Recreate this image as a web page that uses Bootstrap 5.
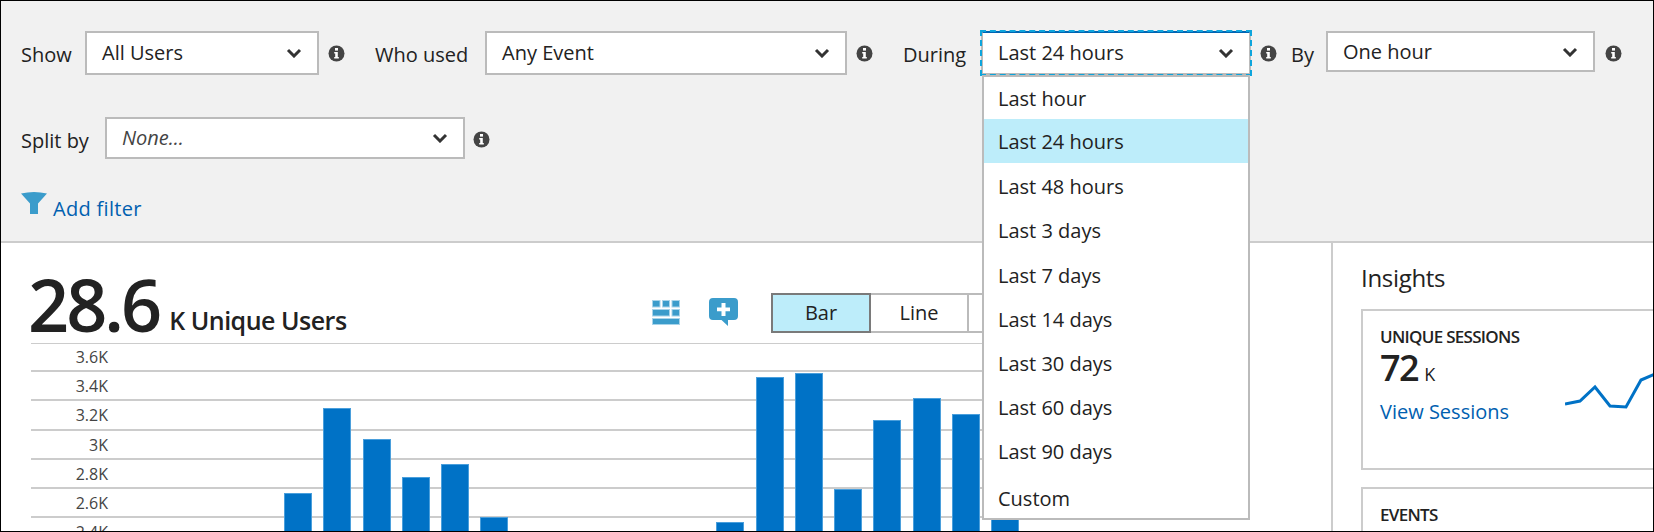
<!DOCTYPE html>
<html lang="en">
<head>
    <meta charset="UTF-8">
    <meta name="viewport" content="width=device-width, initial-scale=1.0">
    <title>Users - Segmentation</title>
    <link href="https://cdn.jsdelivr.net/npm/bootstrap@5.3.2/dist/css/bootstrap.min.css" rel="stylesheet">
    <style>
        html, body { height: 100%; overflow: hidden; }
        body { font-family: "Open Sans", "Liberation Sans", sans-serif; font-size: 20px; color: #222; background: #fff; }
        .app-frame { width: 1654px; height: 532px; border: 1px solid #000; overflow: hidden; }
        .filter-area { height: 242px; background: #f1f1f1; border-bottom: 2px solid #ccc; padding: 30px 0 0 20px; }
        .filter-row { height: 86px; }
        .filter-row-2 { height: 74px; }
        .fld-label { line-height: 26px; margin-top: 11px; white-space: nowrap; }
        .lbl-show { width: 64px; }
        .lbl-who { width: 110px; margin-left: 30px; }
        .lbl-during { width: 78px; margin-left: 30px; }
        .lbl-by { width: 35px; margin-left: 14px; }
        .lbl-split { width: 84px; }
        .sel-box { height: 44px; background: #fff; border: 2px solid #bbb; padding: 0 15px; line-height: 36px; white-space: nowrap; }
        .sel-show { width: 234px; }
        .sel-who { width: 362px; }
        .sel-during { width: 270px; border-color: #0065b3 #bbb #bbb; outline: 2px dashed #0ea5dc; outline-offset: -1px; }
        .sel-by { width: 269px; height: 41px; }
        .sel-split { width: 360px; height: 42px; font-style: italic; color: #444; }
        .info-ico { margin: 14px 0 0 9px; flex: none; }
        .info-by { margin-left: 8px; }
        .info-last { margin-left: 10px; }
        .during-menu { top: 100%; left: 1px; width: 268px; height: 445px; margin: 0; padding: 2px 0 0; border: 2px solid #bbb; border-radius: 0; font-size: 20px; z-index: 20; }
        .during-menu .dropdown-item { padding: 0 14px; height: 44.2px; line-height: 48px; color: #222; }
        .during-menu .dropdown-item.active { background: #bdedfa; color: #222; line-height: 46px; }
        .during-menu .dropdown-item.first-opt { height: 40px; line-height: 40px; }
        .during-menu .dropdown-item.last-opt { padding-top: 2px; }
        .add-filter { color: #0060b0; text-decoration: none; line-height: 26px; letter-spacing: 0.3px; }
        .add-filter svg { margin-right: 6px; flex: none; }
        .add-filter span { margin-top: 5px; }
        .main-area { height: 288px; }
        .chart-col { width: 1330px; position: relative; overflow: hidden; }
        .chart-head { height: 100px; padding-left: 27px; }
        .big-num { font-size: 72px; font-weight: 600; letter-spacing: -3px; line-height: 72px; margin-top: 25px; color: #222; }
        .big-unit { font-size: 25px; font-weight: 600; letter-spacing: -0.5px; margin: 62px 0 0 10px; line-height: 30px; }
        .chart-tools { position: absolute; left: 651px; top: 50px; }
        .grid-ico { margin-top: 7px; }
        .chat-ico { margin: 5px 0 0 29px; }
        .type-btns { margin-left: 35px; }
        .type-btn { width: 100px; height: 40px; border: 2px solid #bbb; border-radius: 0; background: #fff; color: #222; font-size: 20px; padding: 0; margin-left: -2px; }
        .type-btn.sel-on { background: #bdedfa; border-color: #7a7a7a; position: relative; z-index: 1; }
        .plot-area { position: relative; margin-left: 30px; width: 1040px; }
        .grid-row { height: 29.3px; border-top: 2px solid #ccc; font-size: 16px; color: #444; line-height: 28px; width: 1040px; padding-right: 963px; text-align: right; white-space: nowrap; }
        .grid-row.grid-top { height: 27px; border-top-width: 1px; line-height: 27px; }
        .bar-layer { position: absolute; left: 253px; top: 0; height: 188px; gap: 11.3px; }
        .bar-col { width: 28px; background: #0072c6; border: 1px solid #4a9fdc; border-bottom: 0; flex: none; }
        .bar-col.no-val { border: 0; }
        .side-col { width: 322px; border-left: 2px solid #ccc; padding: 19px 0 0 28px; overflow: hidden; position: relative; }
        .side-title { font-size: 24px; line-height: 32px; margin-bottom: 15px; letter-spacing: -0.3px; }
        .insight-box { width: 340px; border: 2px solid #ccc; padding: 15px 17px 0; position: relative; }
        .insight-a { height: 161px; margin-bottom: 17px; }
        .insight-b { height: 100px; }
        .insight-name { font-size: 17px; font-weight: 600; line-height: 22px; letter-spacing: -0.7px; }
        .insight-val { font-size: 36px; font-weight: 600; line-height: 40px; letter-spacing: -1.5px; }
        .insight-unit { font-size: 18px; font-weight: 400; margin-left: 6px; letter-spacing: 0; }
        .insight-link { color: #0060b0; text-decoration: none; line-height: 26px; display: block; margin-top: 5px; }
        .spark-line { position: absolute; left: 202px; top: 59px; }
    </style>
</head>
<body>
    <div class="app-frame">
        <!-- filtros -->
        <div class="filter-area">
            <div class="d-flex align-items-start filter-row">
                <span class="fld-label lbl-show">Show</span>
                <div class="sel-box sel-show d-flex justify-content-between align-items-center">All Users
                    <svg width="16" height="10" viewBox="0 0 16 10"><path d="M2 2l6 6 6-6" fill="none" stroke="#333" stroke-width="3"/></svg>
                </div>
                <svg class="info-ico" width="17" height="17" viewBox="0 0 17 17"><circle cx="8.5" cy="8.5" r="8" fill="#444"/><rect x="7" y="3" width="3" height="2.6" fill="#fff"/><path d="M6.2 7h3.6v5h1v1.6H6.2V12h1V8.6h-1z" fill="#fff"/></svg>
                <span class="fld-label lbl-who">Who used</span>
                <div class="sel-box sel-who d-flex justify-content-between align-items-center">Any Event
                    <svg width="16" height="10" viewBox="0 0 16 10"><path d="M2 2l6 6 6-6" fill="none" stroke="#333" stroke-width="3"/></svg>
                </div>
                <svg class="info-ico" width="17" height="17" viewBox="0 0 17 17"><circle cx="8.5" cy="8.5" r="8" fill="#444"/><rect x="7" y="3" width="3" height="2.6" fill="#fff"/><path d="M6.2 7h3.6v5h1v1.6H6.2V12h1V8.6h-1z" fill="#fff"/></svg>
                <span class="fld-label lbl-during">During</span>
                <div class="dropdown">
                    <div class="sel-box sel-during d-flex justify-content-between align-items-center">Last 24 hours
                        <svg width="16" height="10" viewBox="0 0 16 10"><path d="M2 2l6 6 6-6" fill="none" stroke="#333" stroke-width="3"/></svg>
                    </div>
                    <div class="dropdown-menu show during-menu">
                        <a class="dropdown-item first-opt" href="#">Last hour</a>
                        <a class="dropdown-item active" href="#">Last 24 hours</a>
                        <a class="dropdown-item" href="#">Last 48 hours</a>
                        <a class="dropdown-item" href="#">Last 3 days</a>
                        <a class="dropdown-item" href="#">Last 7 days</a>
                        <a class="dropdown-item" href="#">Last 14 days</a>
                        <a class="dropdown-item" href="#">Last 30 days</a>
                        <a class="dropdown-item" href="#">Last 60 days</a>
                        <a class="dropdown-item" href="#">Last 90 days</a>
                        <a class="dropdown-item last-opt" href="#">Custom</a>
                    </div>
                </div>
                <svg class="info-ico" width="17" height="17" viewBox="0 0 17 17"><circle cx="8.5" cy="8.5" r="8" fill="#444"/><rect x="7" y="3" width="3" height="2.6" fill="#fff"/><path d="M6.2 7h3.6v5h1v1.6H6.2V12h1V8.6h-1z" fill="#fff"/></svg>
                <span class="fld-label lbl-by">By</span>
                <div class="sel-box sel-by d-flex justify-content-between align-items-center">One hour
                    <svg width="16" height="10" viewBox="0 0 16 10"><path d="M2 2l6 6 6-6" fill="none" stroke="#333" stroke-width="3"/></svg>
                </div>
                <svg class="info-ico info-last" width="17" height="17" viewBox="0 0 17 17"><circle cx="8.5" cy="8.5" r="8" fill="#444"/><rect x="7" y="3" width="3" height="2.6" fill="#fff"/><path d="M6.2 7h3.6v5h1v1.6H6.2V12h1V8.6h-1z" fill="#fff"/></svg>
            </div>
            <div class="d-flex align-items-start filter-row-2">
                <span class="fld-label lbl-split">Split by</span>
                <div class="sel-box sel-split d-flex justify-content-between align-items-center">None...
                    <svg width="16" height="10" viewBox="0 0 16 10"><path d="M2 2l6 6 6-6" fill="none" stroke="#333" stroke-width="3"/></svg>
                </div>
                <svg class="info-ico info-by" width="17" height="17" viewBox="0 0 17 17"><circle cx="8.5" cy="8.5" r="8" fill="#444"/><rect x="7" y="3" width="3" height="2.6" fill="#fff"/><path d="M6.2 7h3.6v5h1v1.6H6.2V12h1V8.6h-1z" fill="#fff"/></svg>
            </div>
            <a class="add-filter d-inline-flex align-items-start" href="#">
                <svg width="26" height="24" viewBox="0 0 26 24"><path d="M0 2.5Q13-.5 26 2.5L17 12.5V23H9V12.5z" fill="#3b9ccb"/></svg><span>Add filter</span>
            </a>
        </div>

        <div class="d-flex main-area">
            <div class="chart-col">
                <div class="d-flex chart-head">
                    <span class="big-num">28.6</span>
                    <span class="big-unit">K Unique Users</span>
                </div>
                <div class="d-flex align-items-start chart-tools">
                    <svg class="grid-ico" width="28" height="25" viewBox="0 0 28 25" fill="#3b9ccb" stroke="#a8d4ea" stroke-width="1">
                        <rect x=".5" y=".5" width="7.5" height="6.5"/><rect x="10.5" y=".5" width="7" height="6.5"/><rect x="20" y=".5" width="7.5" height="6.5"/>
                        <rect x=".5" y="9.5" width="17" height="6.5"/><rect x="20" y="9.5" width="7.5" height="6.5"/>
                        <rect x=".5" y="18.5" width="27" height="6"/>
                    </svg>
                    <svg class="chat-ico" width="29" height="29" viewBox="0 0 29 29"><path d="M4 0H25Q29 0 29 4V18Q29 22 25 22H19V28L12.5 22H4Q0 22 0 18V4Q0 0 4 0Z" fill="#3b9ccb"/><path d="M12.5 5h4v4.5H21v3.8h-4.5V18h-4v-4.700H8V9.500h4.500z" fill="#fff"/></svg>
                    <div class="d-flex type-btns">
                        <button type="button" class="btn type-btn sel-on">Bar</button>
                        <button type="button" class="btn type-btn">Line</button>
                        <button type="button" class="btn type-btn"></button>
                    </div>
                </div>
                <div class="plot-area">
                    <div class="grid-row grid-top">3.6K</div>
                    <div class="grid-row">3.4K</div>
                    <div class="grid-row">3.2K</div>
                    <div class="grid-row">3K</div>
                    <div class="grid-row">2.8K</div>
                    <div class="grid-row">2.6K</div>
                    <div class="grid-row">2.4K</div>
                    <div class="d-flex align-items-end bar-layer">
                        <div class="bar-col" style="height:38px"></div>
                        <div class="bar-col" style="height:123px"></div>
                        <div class="bar-col" style="height:92px"></div>
                        <div class="bar-col" style="height:54px"></div>
                        <div class="bar-col" style="height:67px"></div>
                        <div class="bar-col" style="height:14px"></div>
                        <div class="bar-col no-val"></div>
                        <div class="bar-col no-val"></div>
                        <div class="bar-col no-val"></div>
                        <div class="bar-col no-val"></div>
                        <div class="bar-col no-val"></div>
                        <div class="bar-col" style="height:9px"></div>
                        <div class="bar-col" style="height:154px"></div>
                        <div class="bar-col" style="height:158px"></div>
                        <div class="bar-col" style="height:42px"></div>
                        <div class="bar-col" style="height:111px"></div>
                        <div class="bar-col" style="height:133px"></div>
                        <div class="bar-col" style="height:117px"></div>
                        <div class="bar-col" style="height:80px"></div>
                    </div>
                </div>
            </div>
            <div class="side-col">
                <div class="side-title">Insights</div>
                <div class="insight-box insight-a">
                    <div class="insight-name">UNIQUE SESSIONS</div>
                    <div class="insight-val">72<span class="insight-unit">K</span></div>
                    <a class="insight-link" href="#">View Sessions</a>
                    <svg class="spark-line" width="100" height="50" viewBox="0 0 100 50"><polyline points="0,34 15,31 30,17 45,36 61,37 76,10 95,2" fill="none" stroke="#0072c6" stroke-width="3"/></svg>
                </div>
                <div class="insight-box insight-b">
                    <div class="insight-name">EVENTS</div>
                </div>
            </div>
        </div>
    </div>

    <script src="https://cdn.jsdelivr.net/npm/bootstrap@5.3.2/dist/js/bootstrap.bundle.min.js"></script>
</body>
</html>
